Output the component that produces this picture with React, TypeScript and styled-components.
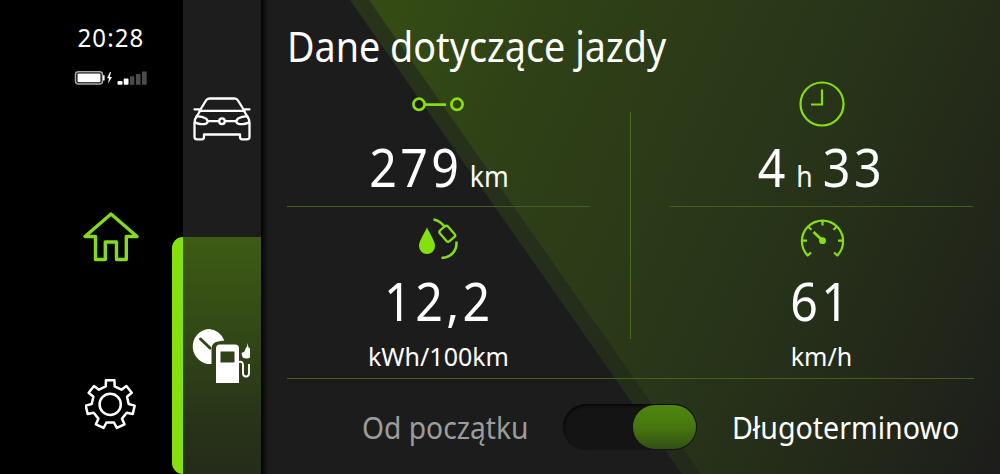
import React from 'react';
import styled, { createGlobalStyle } from 'styled-components';

const green = '#86e010';

const GlobalStyle = createGlobalStyle`
  * { box-sizing: border-box; }
  body { margin: 0; background: #000; }
`;

const Screen = styled.div`
  display: flex;
  width: 1000px;
  height: 474px;
  overflow: hidden;
  background: #000;
  color: #fff;
  font-family: 'Noto Sans', sans-serif;
`;

const Rail = styled.aside`
  display: flex;
  flex-direction: column;
  align-items: center;
  width: 172px;
  padding: 23px 0 0 50px;
`;

const Clock = styled.time`
  font-size: 25px;
  line-height: 28px;
  letter-spacing: 1.2px;
  white-space: nowrap;
  transform: scaleX(0.96);
`;

const Status = styled.div`
  display: flex;
  margin-top: 19px;
  height: 16px;
  svg { display: block; }
`;

const RailButton = styled.button<{ $top: number; $color: string }>`
  display: block;
  margin: ${p => p.$top}px 0 0;
  padding: 0;
  border: 0;
  background: none;
  color: ${p => p.$color};
  svg { display: block; }
`;

const Marker = styled.div`
  width: 11px;
  height: 237px;
  align-self: flex-end;
  border-radius: 11px 0 0 11px;
  background: ${green};
`;

const Tabs = styled.nav`
  display: flex;
  flex-direction: column;
  width: 78px;
  height: 474px;
  background: #1d1d1d;
`;

const Tab = styled.button<{ $active?: boolean }>`
  display: flex;
  align-items: center;
  justify-content: center;
  width: 78px;
  height: 237px;
  padding: 0 ${p => (p.$active ? 3 : 1)}px 0 0;
  border: 0;
  color: #fff;
  background: ${p => (p.$active ? 'linear-gradient(#3d5c14, #344b16 35%, #283319 78%, #252c1a)' : '#1d1d1d')};
`;

const Panel = styled.main`
  position: relative;
  width: 739px;
  height: 474px;
  padding: 0 26px;
  background: linear-gradient(90deg, #050505 0, #0a0a0a 2px, #1c1c1c 7px);
`;

const Beam = styled.div<{ $left: number; $bg: string }>`
  position: absolute;
  inset: 0;
  background: ${p => p.$bg};
  clip-path: polygon(${p => p.$left}px 0, 100% 0, 100% 100%, ${p => p.$left + 332}px 100%);
`;

const Content = styled.div`
  position: relative;
`;

const Title = styled.h1`
  margin: 0;
  height: 80px;
  padding-top: 17px;
  font-size: 41px;
  line-height: 58px;
  font-weight: 400;
  white-space: nowrap;
  transform: scaleX(0.92);
  transform-origin: 0 0;
`;

const Grid = styled.div`
  display: grid;
  grid-template-columns: 303px 80px 303px;
  height: 298px;
`;

const Column = styled.div`
  display: flex;
  flex-direction: column;
`;

const Metric = styled.section<{ $line?: boolean }>`
  display: flex;
  flex-direction: column;
  align-items: center;
  height: ${p => (p.$line ? 127 : 171)}px;
  border-bottom: ${p => (p.$line ? '1px solid #43601c' : '0')};
`;

const IconSlot = styled.div<{ $h: number; $top?: number }>`
  flex: none;
  height: ${p => p.$h}px;
  padding-top: ${p => p.$top ?? 0}px;
  svg { display: block; }
`;

const Reading = styled.div`
  display: flex;
  align-items: baseline;
  height: 70px;
  line-height: 70px;
  font-size: 52px;
  letter-spacing: 3.6px;
  white-space: nowrap;
  transform: scaleX(0.93);
`;

const Unit = styled.span<{ $gap?: number }>`
  margin: 0 ${p => p.$gap ?? 0}px 0 8px;
  font-size: 28.5px;
  letter-spacing: 0;
`;

const Caption = styled.div`
  height: 36px;
  margin-top: 2px;
  font-size: 25px;
  line-height: 36px;
  white-space: nowrap;
`;

const Divider = styled.div`
  width: 1px;
  height: 227px;
  margin: 32px auto 0;
  background: #4b6a20;
`;

const Footer = styled.footer`
  display: flex;
  align-items: center;
  height: 96px;
  padding-left: 75px;
  border-top: 1px solid #42621c;
`;

const Option = styled.span<{ $muted?: boolean; $w: number }>`
  width: ${p => p.$w}px;
  font-size: 31px;
  line-height: 44px;
  white-space: nowrap;
  color: ${p => (p.$muted ? '#9c9c9c' : '#fff')};
  transform: scaleX(${p => (p.$muted ? 0.91 : 0.922)});
  transform-origin: 0 0;
`;

const Switch = styled.button`
  display: flex;
  justify-content: flex-end;
  width: 134px;
  height: 46px;
  margin: 0 35px 0 0;
  padding: 1px 1px 0 0;
  border: 0;
  border-radius: 23px;
  background: #141414;
  box-shadow: inset 1px 2px 2px #090909;
`;

const Knob = styled.span`
  width: 63px;
  height: 44px;
  border-radius: 22px;
  background: linear-gradient(#4e870e, #47770f 50%, #315013);
`;

const StatusIcons = () => (
  <svg width="74" height="16" viewBox="0 0 74 16">
    <rect x="1.500" y="1.700" width="27" height="12.4" rx="3" fill="none" stroke="#aaa" strokeWidth="1.5" />
    <rect x="3.500" y="3.600" width="23" height="8.6" rx="1" fill="#fff" />
    <path d="M29.800 5.2v5.2" stroke="#fff" strokeWidth="1.6" />
    <path d="M36 2 33 8.300h2l-1 5.5 4-6.900h-2.300l1.300-4.900z" fill="#fff" />
    <rect x="43.500" y="11" width="5" height="3.700" rx="1" fill="#fff" />
    <rect x="49.700" y="8.500" width="4.800" height="6.200" rx="1" fill="#fff" />
    <path d="M56 14.700V6.200h4.300v8.500z M62 14.700V4h4.500v10.700z M68 14.700V1.600h4.700v13.100z" fill="#4b4b4b" />
  </svg>
);

const HomeIcon = () => (
  <svg width="56" height="50" viewBox="0 0 56 50" fill="none" stroke="#84d921" strokeWidth="3.400" strokeLinejoin="round">
    <path d="M28 2 2 24.500h10.500V47.500h9.800V30h11.200v17.500h9.800V24.500H54z" />
  </svg>
);

const gear = Array.from({ length: 7 }, (_, i) => {
  const c = (i * 360) / 7 - 90;
  return [[-14, 18.5], [-10, 24.5], [10, 24.5], [14, 18.5]]
    .map(([a, r]) => {
      const t = ((c + a) * Math.PI) / 180;
      return `${(26 + r * Math.cos(t)).toFixed(2)},${(26 + r * Math.sin(t)).toFixed(2)}`;
    })
    .join(' ');
}).join(' ');

const GearIcon = () => (
  <svg width="52" height="52" viewBox="0.8 0.6 52 52" fill="none" stroke="currentColor" strokeWidth="2.500" strokeLinejoin="round">
    <polygon points={gear} />
    <circle cx="26" cy="26" r="10.600" />
  </svg>
);

const CarIcon = () => (
  <svg width="58" height="44" viewBox="0 0 58 44" fill="none" stroke="currentColor" strokeWidth="2.300" strokeLinejoin="round" strokeLinecap="round">
    <path d="M1.500 12.300h4.500l1.500 1.500h43l1.500-1.500h4.500" />
    <path d="M6.500 14 13 3.500Q14.200 1.500 16.500 1.500h25Q43.800 1.500 45 3.500L51.500 14" />
    <path d="M7 14 4 19q-2.500 3-2.500 7v14q0 2.300 2.500 2.300h5q2 0 2-2.300v-2.500h36V40q0 2.300 2 2.300h5q2.500 0 2.500-2.300V26q0-4-2.500-7l-3-5" />
    <path d="M3.500 19.500q4.500-.5 9.500 2l2 2.700q-1 3-4 3Q5 27.200 2 25.200M54.500 19.500q-4.500-.5-9.500 2l-2 2.700q1 3 4 3 6 0 9-2M15 24.200h11M32 24.200h11" />
    <circle cx="29" cy="24.200" r="2.800" />
  </svg>
);

const TripIcon = () => (
  <svg width="59" height="54" viewBox="0 0 59 54">
    <path d="M18 0A17.500 17.500 0 1 0 20.500 35V20q0-6.500 6.500-7.500L33.300 11.500A17.500 17.500 0 0 0 18 0z" fill="#fff" />
    <path d="m9.500 10 9.500 9" stroke="#304618" strokeWidth="3" strokeLinecap="round" />
    <path fillRule="evenodd" d="M29 15.500h15q4 0 4 4V54H25V19.500q0-4 4-4zM29.500 22.500v11h14v-11z" fill="#fff" />
    <path d="M48 33q4-1 4 3v8q0 3.500 3 3.500t3-3.500v-9" fill="none" stroke="#fff" strokeWidth="1.900" />
    <path d="m56.500 14 1 4.500 1.500 1v9q-1 1-3.500 1-4 0-4.300-2.500l-.7-3 3-1.500 1.500-4 1-.5z" fill="#fff" />
  </svg>
);

const RouteIcon = () => (
  <svg width="53" height="16" viewBox="0 0 53 16" fill="none" stroke={green} strokeWidth="2.700">
    <circle cx="7" cy="8.300" r="5.600" /><circle cx="45" cy="8.300" r="5.600" /><path d="M13 8.600h21" />
  </svg>
);

const ClockIcon = () => (
  <svg width="46" height="47" viewBox="0 0 46 47" fill="none" stroke={green} strokeWidth="2.200">
    <circle cx="23" cy="24" r="21.500" /><path d="M23 9.500V24.500H12" />
  </svg>
);

const FuelIcon = () => (
  <svg width="42" height="42" viewBox="0 0 42 42" fill="none" stroke={green} strokeWidth="2.300">
    <path d="M9 9.500C5.500 17 1 23 1 28a8 8 0 0 0 16 0c0-5-4.500-11-8-18.500z" fill={green} stroke="none" />
    <path d="M15.500 1.500C21 2 24 5.500 27.500 9.500M26.500 8.500l-4.500 4q-1.500 1.500 0 3l6.500 7.500q1.500 1.500 3 .2l5-4.200q1.500-1.500 0-3L30 8.500q-1.500-1.500-3.500 0z" />
    <path d="M23.500 40C33 39.500 39 33 38.500 23.500" strokeWidth="2.600" />
  </svg>
);

const SpeedIcon = () => (
  <svg width="44" height="40" viewBox="0 0 44 40" fill="none" stroke={green} strokeWidth="2.200" strokeLinejoin="round">
    <path d="m11 34.500-3.300 3A20.600 20.600 0 1 1 37.300 37.500l-3.300-3" />
    <path d="M22.500 2.500v5M2 22.700h5M38 22.700h5M8 8.500l3.500 3.200M37 8.500l-3.500 3.200" />
    <path d="m13.500 14 8 7.500" strokeWidth="2.700" /><circle cx="22.500" cy="22.700" r="3.400" fill={green} stroke="none" />
  </svg>
);

export default function App() {
  return (
    <Screen>
      <GlobalStyle />
      <Rail>
        <Clock>20:28</Clock>
        <Status><StatusIcons /></Status>
        <RailButton $top={126} $color={green} aria-label="Home"><HomeIcon /></RailButton>
        <RailButton $top={117} $color="#fff" aria-label="Settings"><GearIcon /></RailButton>
      </Rail>
      <Marker />
      <Tabs>
        <Tab aria-label="Car"><CarIcon /></Tab>
        <Tab $active aria-label="Trip"><TripIcon /></Tab>
      </Tabs>
      <Panel>
        <Beam $left={89} $bg="linear-gradient(115deg, #29351a, #242c1a 60%, #1d1e1c)" />
        <Beam $left={108} $bg="linear-gradient(115deg, #344b14 15%, #2f4216 30%, #2b3a18 50%, #283419 64%, #232919 82%, #1d1e1b 98%)" />
        <Content>
          <Title>Dane dotyczące jazdy</Title>
          <Grid>
            <Column>
              <Metric $line>
                <IconSlot $h={52} $top={16}><RouteIcon /></IconSlot>
                <Reading>279<Unit>km</Unit></Reading>
              </Metric>
              <Metric>
                <IconSlot $h={59} $top={11}><FuelIcon /></IconSlot>
                <Reading>12,2</Reading>
                <Caption>kWh/100km</Caption>
              </Metric>
            </Column>
            <Divider />
            <Column>
              <Metric $line>
                <IconSlot $h={52}><ClockIcon /></IconSlot>
                <Reading>4<Unit $gap={11}>h</Unit>33</Reading>
              </Metric>
              <Metric>
                <IconSlot $h={59} $top={11}><SpeedIcon /></IconSlot>
                <Reading>61</Reading>
                <Caption>km/h</Caption>
              </Metric>
            </Column>
          </Grid>
          <Footer>
            <Option $muted $w={201}>Od początku</Option>
            <Switch role="switch" aria-checked="true"><Knob /></Switch>
            <Option $w={230}>Długoterminowo</Option>
          </Footer>
        </Content>
      </Panel>
    </Screen>
  );
}
